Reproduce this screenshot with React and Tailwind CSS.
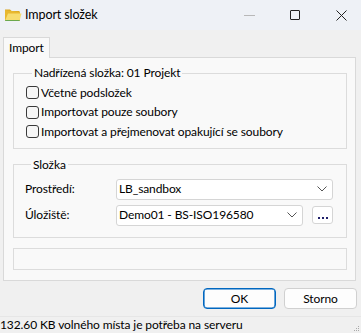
import React from "react";

const font = { fontFamily: 'Lato, "Noto Sans", sans-serif', letterSpacing: "-0.1px" };

function FolderIcon() {
  return (
    <svg width="18" height="16" viewBox="0 0 18 16">
      <path d="M1 2.5 h5 l1.5 1.5 h8 v2 H1 z" fill="#d9a521" />
      <path d="M1 3 v11 h15 v-9 z" fill="#e8b830" />
      <path d="M1 14 L4 6.5 H17.5 L15.5 14 z" fill="#f7dc6f" />
      <path d="M1 14 H15.5 L15.8 13 H1.4 z" fill="#6aa84f" />
    </svg>
  );
}

function Checkbox({ label }) {
  return (
    <label className="flex items-center h-[19.5px]">
      <span className="w-[13px] h-[13px] border border-[#3a3a3a] rounded-[3px] bg-[#f6f6f6] mr-[2px] shrink-0" />
      <span className="text-[12px] text-black">{label}</span>
    </label>
  );
}

function Select({ value, w }) {
  return (
    <div className={`${w} h-[21px] bg-white border border-[#d5d5d5] rounded-[3px] flex items-center pl-[2px] pr-[5px]`}>
      <span className="flex-1 text-[12px] text-black">{value}</span>
      <svg width="10" height="6" viewBox="0 0 10 6">
        <path d="M0.5 0.5 L5 5 L9.5 0.5" fill="none" stroke="#555" strokeWidth="1" />
      </svg>
    </div>
  );
}

export default function App() {
  return (
    <div className="w-[361px] h-[333px] bg-[#f0f0f0] flex flex-col overflow-hidden relative" style={font}>
      <div className="h-[30px] bg-[#eef1f6] flex items-center shrink-0">
        <div className="ml-[4px] mr-[3px] flex items-center"><FolderIcon /></div>
        <span className="text-[12.5px] text-black">Import složek</span>
        <div className="flex-1" />
        <div className="flex -mr-[3px]">
          <div className="w-[46px] h-[30px] flex items-center justify-center">
            <div className="w-[11px] h-px bg-[#b8b8b8]" />
          </div>
          <div className="w-[46px] h-[30px] flex items-center justify-center">
            <div className="w-[10px] h-[10px] border border-[#222] rounded-[1px]" />
          </div>
          <div className="w-[46px] h-[30px] flex items-center justify-center">
            <svg width="11" height="11" viewBox="0 0 11 11">
              <path d="M0.5 0.5 L10.5 10.5 M10.5 0.5 L0.5 10.5" stroke="#222" strokeWidth="1" />
            </svg>
          </div>
        </div>
      </div>

      <div className="mt-[6px] ml-[3px] w-[353px] shrink-0">
        <div className="flex">
          <div className="w-[47px] h-[21px] border border-b-0 border-[#d9d9d9] bg-[#f9f9f9] flex items-center pl-[5px] text-[12px] text-black relative top-px">
            Import
          </div>
        </div>
        <div className="h-[224px] border border-[#d9d9d9] bg-[#f9f9f9] pl-[9px] pr-[8px] pt-[7px]">
          <fieldset className="border border-[#dcdcdc] pl-[12px] pb-[6px]">
            <legend className="ml-[6px] px-[2px] text-[12px] text-black leading-[16px]">Nadřízená složka: 01 Projekt</legend>
            <div className="pt-[2px]">
              <Checkbox label="Včetně podsložek" />
              <Checkbox label="Importovat pouze soubory" />
              <Checkbox label="Importovat a přejmenovat opakující se soubory" />
            </div>
          </fieldset>
          <fieldset className="mt-[8px] border border-[#dcdcdc] pl-[11px] pb-[11px]">
            <legend className="ml-[6px] px-[2px] text-[12px] text-black leading-[16px]">Složka</legend>
            <div className="flex items-center mt-[6px]">
              <span className="w-[91px] text-[12px] text-black">Prostředí:</span>
              <Select value="LB_sandbox" w="w-[217px]" />
            </div>
            <div className="flex items-center mt-[5px]">
              <span className="w-[91px] text-[12px] text-black">Úložiště:</span>
              <Select value="Demo01 - BS-ISO196580" w="w-[187px]" />
              <div className="ml-[9px] w-[21px] h-[18px] bg-white border border-[#d5d5d5] rounded-[3px] flex items-center justify-center gap-[2px] pt-[5px]">
                <span className="w-[2px] h-[2px] bg-[#20206a]" />
                <span className="w-[2px] h-[2px] bg-[#20206a]" />
                <span className="w-[2px] h-[2px] bg-[#20206a]" />
              </div>
            </div>
          </fieldset>
          <div className="mt-[10px] h-[22px] border border-[#dcdcdc]" />
        </div>
      </div>

      <div className="flex mt-[7px] ml-[203px] gap-[8px] shrink-0">
        <div className="w-[73px] h-[21px] rounded-[4px] border border-[#0067c0] shadow-[inset_0_0_0_0.6px_#0067c0] bg-[#fdfdfd] flex items-center justify-center text-[12px] text-black">OK</div>
        <div className="w-[73px] h-[21px] rounded-[4px] border border-[#d0d0d0] bg-[#fdfdfd] flex items-center justify-center text-[12px] text-black">Storno</div>
      </div>

      <div className="mt-[7px] flex-1 border-t border-[#e6e6e6] flex items-center text-[12px] leading-[16px] text-black whitespace-nowrap">
        132.60 KB volného místa je potřeba na serveru
      </div>
      <div className="absolute right-[2px] bottom-[2px] grid grid-cols-3 gap-[1px]">
        <span />
        <span />
        <span className="w-[1px] h-[1px] bg-[#aaa]" />
        <span />
        <span className="w-[1px] h-[1px] bg-[#aaa]" />
        <span className="w-[1px] h-[1px] bg-[#aaa]" />
        <span className="w-[1px] h-[1px] bg-[#aaa]" />
        <span className="w-[1px] h-[1px] bg-[#aaa]" />
        <span className="w-[1px] h-[1px] bg-[#aaa]" />
      </div>
    </div>
  );
}
